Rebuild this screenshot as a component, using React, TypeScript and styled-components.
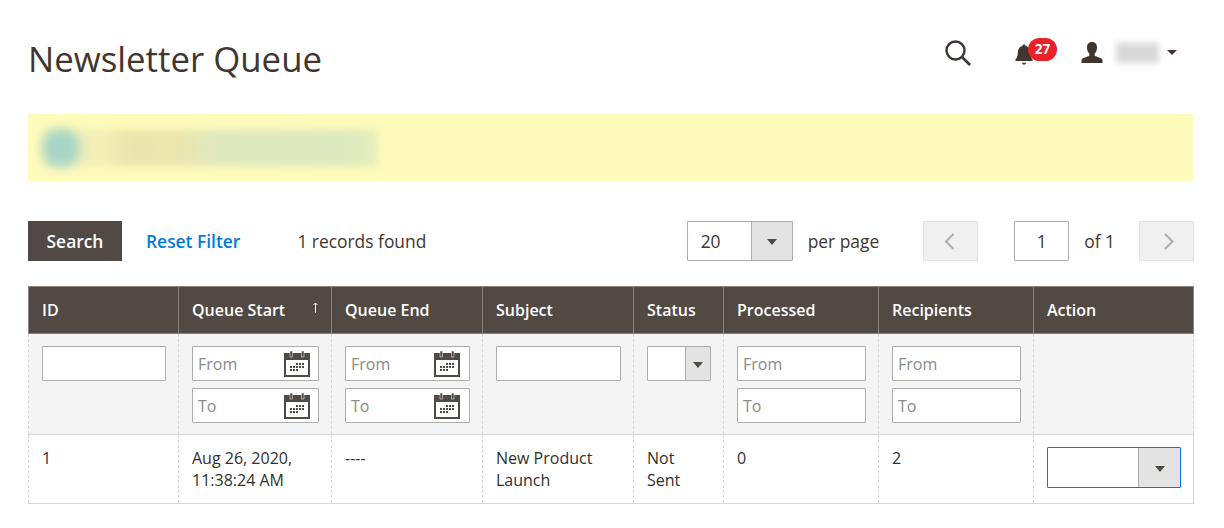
import styled, { createGlobalStyle } from "styled-components";

const GlobalStyle = createGlobalStyle`
  html, body {
    margin: 0;
    padding: 0;
    background: #fff;
  }
  body {
    font-family: "Open Sans", "Liberation Sans", sans-serif;
    font-size: 16px;
    color: #41362f;
  }
`;

const Page = styled.div`
  width: 1224px;
  height: 528px;
  box-sizing: border-box;
  padding: 0 31px 0 28px;
  overflow: hidden;
`;

const Header = styled.header`
  height: 114px;
  display: flex;
  justify-content: space-between;
  align-items: flex-start;
`;

const Title = styled.h1`
  margin: 36px 0 0 0;
  font-size: 34.8px;
  line-height: 46px;
  font-weight: 400;
  color: #41362f;
`;

const Actions = styled.div`
  display: flex;
  align-items: flex-start;
  padding-top: 38px;
  margin-right: 16px;
`;

const IconSlot = styled.div<{ $w: number; $top: number }>`
  position: relative;
  width: ${(p) => p.$w}px;
  height: 30px;
  flex: none;
  padding-top: ${(p) => p.$top}px;
`;

const Badge = styled.span`
  position: absolute;
  left: 14px;
  top: 0;
  width: 29px;
  height: 23px;
  border-radius: 12px;
  background: #eb2128;
  color: #fff;
  font-size: 13.5px;
  font-weight: 700;
  line-height: 23px;
  text-align: center;
`;

const BlurName = styled.div`
  width: 43px;
  height: 20px;
  margin: 5px 0 0 12px;
  background: #d8d8d8;
  filter: blur(3px);
`;

const Caret = styled.span`
  width: 0;
  height: 0;
  margin: 12px 0 0 8px;
  border-left: 5px solid transparent;
  border-right: 5px solid transparent;
  border-top: 5px solid #41362f;
`;

const Notice = styled.div`
  height: 67px;
  background: #fffbbb;
  display: flex;
  align-items: center;
  padding-left: 14px;
  overflow: hidden;
`;

const NoticeBlur = styled.div`
  width: 336px;
  height: 36px;
  display: flex;
  align-items: center;
  background: linear-gradient(90deg, #e6eebb 0%, #f2efb6 18%, #ebe4ae 26%, #ebe5ae 40%, #dfe8bd 52%, #dce8bf 90%, #e6eebb 100%);
  filter: blur(4px);
`;

const NoticeDot = styled.div`
  width: 38px;
  height: 40px;
  border-radius: 50%;
  background: #a8d5c6;
  filter: blur(3px);
`;

const Toolbar = styled.div`
  display: flex;
  align-items: center;
  height: 40px;
  margin-top: 40px;
  font-size: 17.4px;
`;

const SearchButton = styled.button`
  width: 94px;
  height: 40px;
  border: 0;
  padding: 0;
  background: #514943;
  color: #fff;
  font: 600 17.4px "Open Sans", sans-serif;
`;

const ResetLink = styled.a`
  margin-left: 24px;
  color: #007bdb;
  font-weight: 600;
`;

const Found = styled.span`
  margin-left: 57px;
`;

const Spacer = styled.div`
  flex: 1;
`;

const SelectBox = styled.div<{ $w: number; $h: number; $btn: number; $focus?: boolean }>`
  box-sizing: border-box;
  width: ${(p) => p.$w}px;
  height: ${(p) => p.$h}px;
  flex: none;
  display: flex;
  justify-content: space-between;
  background: #fff;
  border: 1px solid ${(p) => (p.$focus ? "#007bdb" : "#adadad")};
  border-radius: 1px;

  & > i {
    width: ${(p) => p.$btn}px;
    display: flex;
    align-items: center;
    justify-content: center;
    background: #e3e3e3;
    border-left: 1px solid #adadad;
    box-sizing: border-box;
  }
  & > i::after {
    content: "";
    margin-top: 2px;
    border-left: 5px solid transparent;
    border-right: 5px solid transparent;
    border-top: 6px solid #514943;
  }
`;

const PerValue = styled.span`
  padding-left: 13px;
  line-height: 38px;
`;

const PerPage = styled.span`
  margin-left: 15px;
`;

const PagerButton = styled.div<{ $left: number; $right?: number }>`
  box-sizing: border-box;
  width: 55px;
  height: 40px;
  margin-left: ${(p) => p.$left}px;
  margin-right: ${(p) => p.$right ?? 0}px;
  display: flex;
  align-items: center;
  justify-content: center;
  background: #f0f0f0;
  border: 1px solid #e3e3e3;
  flex: none;
`;

const PageInput = styled.div`
  box-sizing: border-box;
  width: 55px;
  height: 40px;
  margin-left: 36px;
  border: 1px solid #adadad;
  border-radius: 1px;
  text-align: center;
  line-height: 38px;
`;

const OfTotal = styled.span`
  margin-left: 15px;
`;

const Table = styled.table`
  width: 1165px;
  margin-top: 25px;
  border-collapse: collapse;
  table-layout: fixed;
  font-size: 16px;
`;

const Th = styled.th`
  position: relative;
  height: 47px;
  box-sizing: border-box;
  padding: 0 0 0 13px;
  background: #514943;
  border: 1px solid #8a837e;
  color: #fff;
  font-size: 16px;
  font-weight: 600;
  text-align: left;
`;

const SortArrow = styled.svg`
  position: absolute;
  top: 15px;
  right: 13px;
`;

const FilterCell = styled.td`
  height: 101px;
  box-sizing: border-box;
  padding: 12px 0 0 13px;
  vertical-align: top;
  background: #f4f4f4;
  border: 1px dashed #d6d6d6;
  border-bottom: 1px solid #d6d6d6;
`;

const Field = styled.div<{ $w: number }>`
  box-sizing: border-box;
  position: relative;
  width: ${(p) => p.$w}px;
  height: 35px;
  margin-bottom: 7px;
  padding-left: 5px;
  background: #fff;
  border: 1px solid #adadad;
  border-radius: 1px;
  color: #8a8a8a;
  font-size: 16px;
  line-height: 34px;
`;

const CalendarSlot = styled.span<{ $right: number }>`
  position: absolute;
  right: ${(p) => p.$right}px;
  top: 4px;
  width: 26px;
  height: 26px;
`;

const Td = styled.td`
  height: 69px;
  box-sizing: border-box;
  padding: 12px 8px 0 13px;
  vertical-align: top;
  background: #fff;
  border: 1px dashed #d6d6d6;
  border-bottom: 1px solid #d6d6d6;
  font-size: 16px;
  line-height: 22px;
  color: #303030;
`;

const ActionCell = styled(Td)`
  border-right: 1px solid #d6d6d6;
`;

function SearchIcon() {
  return (
    <svg width="28" height="28" viewBox="0 0 28 28" fill="none" stroke="#41362f">
      <circle cx="11.5" cy="11.5" r="9" strokeWidth="2.4" />
      <path d="M18 18l8 8" strokeWidth="2.6" />
    </svg>
  );
}

function BellIcon() {
  return (
    <svg width="20" height="23" viewBox="0 0 20 24" fill="#41362f">
      <path d="M10 1.5c1 0 1.7.7 1.8 1.6 3 .8 4.400 3.200 4.600 6.400.2 3.700.8 6 2.600 8v1.200H1V17.500c1.800-2 2.400-4.300 2.600-8 .2-3.200 1.600-5.600 4.600-6.400C8.300 2.200 9 1.500 10 1.500z" />
      <path d="M8 20.500h4c0 1.200-.9 2-2 2s-2-.8-2-2z" />
    </svg>
  );
}

function UserIcon() {
  return (
    <svg width="24" height="24" viewBox="0 0 24 24" fill="#41362f">
      <path d="M12 1c3.400 0 5 2.400 5 5.400 0 2.700-1 5-2.300 6.200v2.100c1.600 1 7.300 2 7.800 4.300v3H1.500v-3c.5-2.300 6.200-3.300 7.800-4.300v-2.100C8 11.400 7 9.100 7 6.400 7 3.400 8.600 1 12 1z" />
    </svg>
  );
}

function CalendarIcon() {
  const cells = [];
  for (let row = 0; row < 3; row++) {
    for (let col = 0; col < 5; col++) {
      if (row === 0 && col < 2) continue;
      if (row === 2 && col > 2) continue;
      cells.push(<rect key={`${row}-${col}`} x={6 + col * 3} y={12 + row * 3} width="2" height="2" />);
    }
  }
  return (
    <svg width="26" height="26" viewBox="0 0 26 26">
      <rect x="0" y="2" width="26" height="24" fill="#514943" />
      <rect x="2" y="9" width="22" height="15" fill="#fff" />
      <rect x="6" y="0" width="2.5" height="6" fill="#514943" stroke="#fff" strokeWidth="0.5" />
      <rect x="17.5" y="0" width="2.5" height="6" fill="#514943" stroke="#fff" strokeWidth="0.5" />
      <g fill="#514943">{cells}</g>
    </svg>
  );
}

function Chevron({ dir }: { dir: "left" | "right" }) {
  return (
    <svg width="14" height="17" viewBox="0 0 14 17" fill="none" stroke="#adadad" strokeWidth="2">
      <path d={dir === "left" ? "M9.500 1L2 8.500l7.500 7.500" : "M5 1l7.500 7.500L5 16"} />
    </svg>
  );
}

function DateField({ label, w, right }: { label: string; w: number; right: number }) {
  return (
    <Field $w={w}>
      {label}
      <CalendarSlot $right={right}>
        <CalendarIcon />
      </CalendarSlot>
    </Field>
  );
}

const colWidths = [150, 153, 151, 151, 90, 155, 155, 160];

export default function App() {
  return (
    <Page>
      <GlobalStyle />
      <Header>
        <Title>Newsletter Queue</Title>
        <Actions>
          <IconSlot $w={70} $top={1}>
            <SearchIcon />
          </IconSlot>
          <IconSlot $w={66} $top={5}>
            <BellIcon />
            <Badge>27</Badge>
          </IconSlot>
          <IconSlot $w={24} $top={3}>
            <UserIcon />
          </IconSlot>
          <BlurName />
          <Caret />
        </Actions>
      </Header>

      <Notice>
        <NoticeBlur>
          <NoticeDot />
        </NoticeBlur>
      </Notice>

      <Toolbar>
        <SearchButton>Search</SearchButton>
        <ResetLink>Reset Filter</ResetLink>
        <Found>1 records found</Found>
        <Spacer />
        <SelectBox $w={106} $h={40} $btn={41}>
          <PerValue>20</PerValue>
          <i />
        </SelectBox>
        <PerPage>per page</PerPage>
        <PagerButton $left={44}>
          <Chevron dir="left" />
        </PagerButton>
        <PageInput>1</PageInput>
        <OfTotal>of 1</OfTotal>
        <PagerButton $left={24} $right={-1}>
          <Chevron dir="right" />
        </PagerButton>
      </Toolbar>

      <Table>
        <colgroup>
          {colWidths.map((w, i) => (
            <col key={i} style={{ width: w }} />
          ))}
        </colgroup>
        <thead>
          <tr>
            <Th>ID</Th>
            <Th>
              Queue Start
              <SortArrow width="5" height="11" viewBox="0 0 5 11" fill="none" stroke="#fff">
                <path d="M2.500 11V1M.5 3l2-2 2 2" />
              </SortArrow>
            </Th>
            <Th>Queue End</Th>
            <Th>Subject</Th>
            <Th>Status</Th>
            <Th>Processed</Th>
            <Th>Recipients</Th>
            <Th>Action</Th>
          </tr>
          <tr>
            <FilterCell>
              <Field $w={124} />
            </FilterCell>
            <FilterCell>
              <DateField label="From" w={127} right={8} />
              <DateField label="To" w={127} right={8} />
            </FilterCell>
            <FilterCell>
              <DateField label="From" w={125} right={9} />
              <DateField label="To" w={125} right={9} />
            </FilterCell>
            <FilterCell>
              <Field $w={125} />
            </FilterCell>
            <FilterCell>
              <SelectBox $w={64} $h={35} $btn={25}>
                <span />
                <i />
              </SelectBox>
            </FilterCell>
            <FilterCell>
              <Field $w={129}>From</Field>
              <Field $w={129}>To</Field>
            </FilterCell>
            <FilterCell>
              <Field $w={129}>From</Field>
              <Field $w={129}>To</Field>
            </FilterCell>
            <FilterCell />
          </tr>
        </thead>
        <tbody>
          <tr>
            <Td>1</Td>
            <Td>
              Aug 26, 2020,
              <br />
              11:38:24 AM
            </Td>
            <Td>----</Td>
            <Td>
              New Product
              <br />
              Launch
            </Td>
            <Td>
              Not
              <br />
              Sent
            </Td>
            <Td>0</Td>
            <Td>2</Td>
            <ActionCell>
              <SelectBox $w={134} $h={41} $btn={42} $focus>
                <span />
                <i />
              </SelectBox>
            </ActionCell>
          </tr>
        </tbody>
      </Table>
    </Page>
  );
}
